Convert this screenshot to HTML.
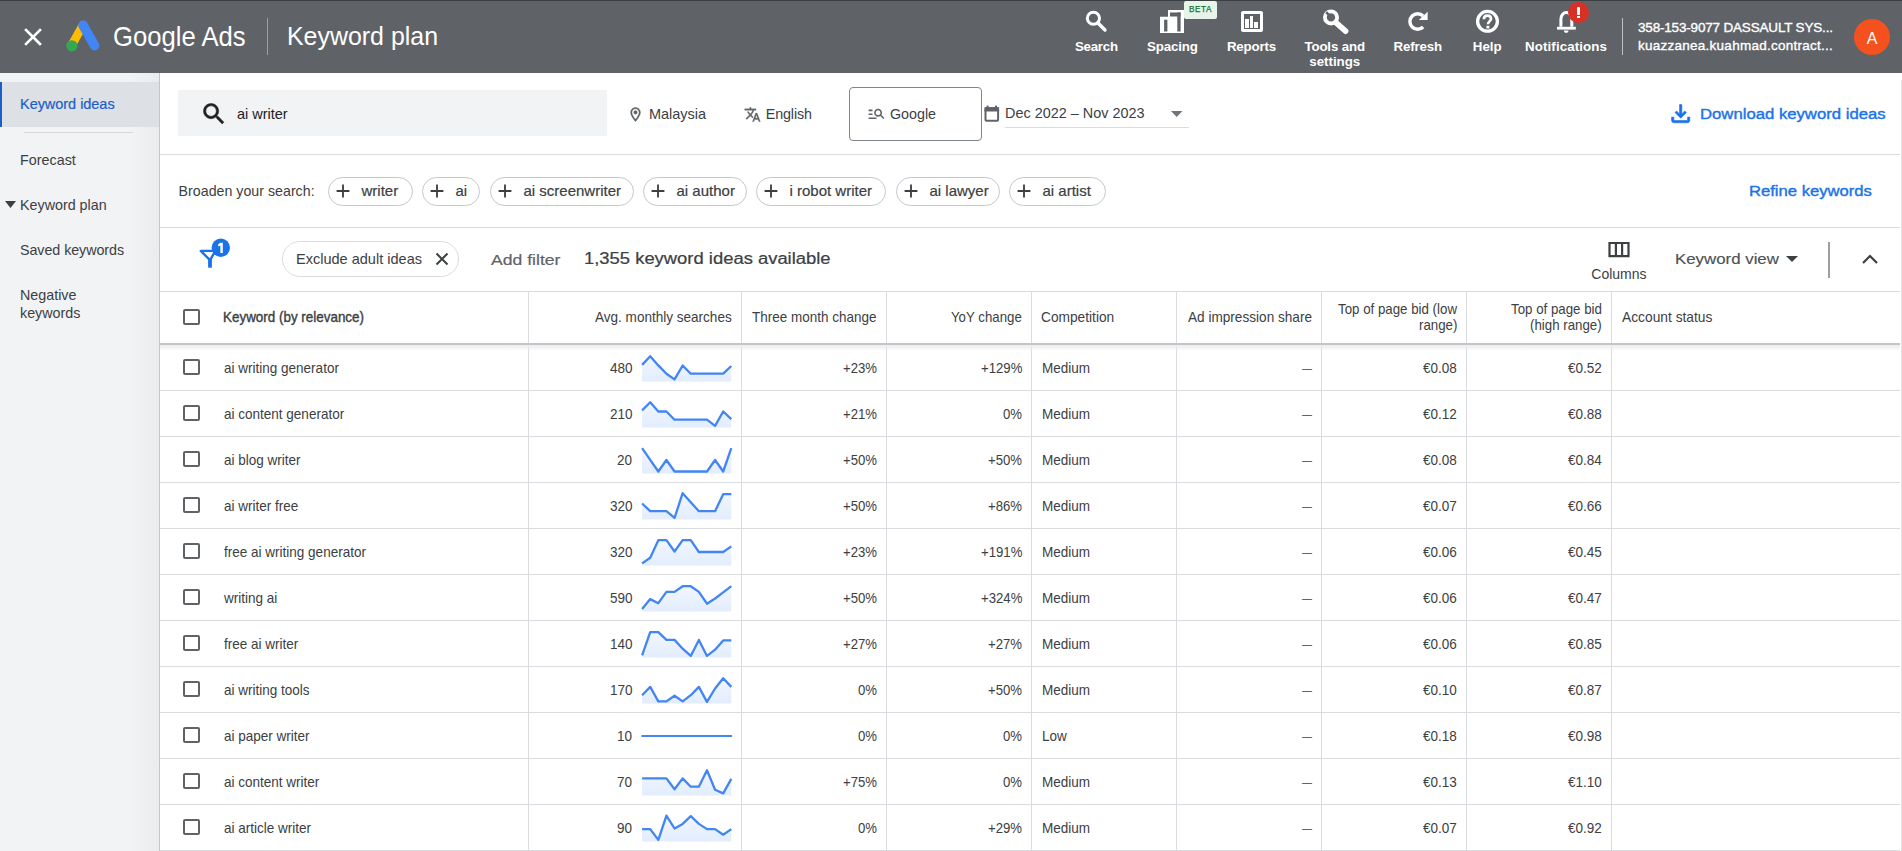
<!DOCTYPE html>
<html><head><meta charset="utf-8"><title>Keyword plan</title>
<style>
html,body{margin:0;padding:0;width:1902px;height:851px;overflow:hidden;background:#fff;font-family:"Liberation Sans", sans-serif;}
.t{position:absolute;white-space:nowrap;}
svg{display:block}
</style></head><body>
<div style="position:absolute;left:0px;top:0px;width:1902px;height:73px;background:#5f6368;"></div>
<div style="position:absolute;left:0px;top:0px;width:1902px;height:1px;background:#3c4043;"></div>
<svg style="position:absolute;left:22px;top:26px;" width="22" height="22" viewBox="0 0 22 22"><path d="M4 4L18 18M18 4L4 18" stroke="#fff" stroke-width="2.6" stroke-linecap="square"/></svg>
<svg style="position:absolute;left:62px;top:18px;" width="42" height="36" viewBox="0 0 42 36">
<path d="M21 7.2 L9.8 27" stroke="#fbbc04" stroke-width="8.6" stroke-linecap="round"/>
<path d="M21 7.2 L32.6 27.6" stroke="#4285f4" stroke-width="9.6" stroke-linecap="round"/>
<circle cx="9.9" cy="27.8" r="5.6" fill="#34a853"/>
</svg>
<div style="position:absolute;left:267px;top:18px;width:1px;height:37px;background:#9aa0a6;"></div>
<svg style="position:absolute;left:1080px;top:5px;" width="32" height="32" viewBox="0 0 32 32"><circle cx="13.4" cy="13.25" r="6.1" fill="none" stroke="#fff" stroke-width="3"/><path d="M18 18 L25 25" stroke="#fff" stroke-width="3.4" stroke-linecap="round"/></svg>
<svg style="position:absolute;left:1150px;top:0px;" width="40" height="40" viewBox="0 0 40 40">
<path d="M10 16.7H18V10H34V33H10Z" fill="#fff"/>
<rect x="14.1" y="19.7" width="3.3" height="11.8" fill="#5f6368"/>
<rect x="20" y="12.5" width="10.6" height="4" fill="#5f6368"/>
<rect x="27.3" y="12.5" width="3.3" height="19" fill="#5f6368"/>
</svg>
<div style="position:absolute;left:1184px;top:1px;width:33px;height:17.5px;background:#e6f4ea;border-radius:2px;"></div>
<div style="position:absolute;left:1241px;top:10.8px;width:15.5px;height:15px;border:3px solid #fff;border-radius:2px;"></div>
<div style="position:absolute;left:1245.2px;top:18.5px;width:3.4px;height:9.1px;background:#fff;"></div>
<div style="position:absolute;left:1249.9px;top:15.9px;width:3.4px;height:11.7px;background:#fff;"></div>
<div style="position:absolute;left:1254.2px;top:21.9px;width:3.6px;height:5.7px;background:#fff;"></div>
<svg style="position:absolute;left:1318px;top:5px;" width="32" height="32" viewBox="0 0 32 32">
<circle cx="13" cy="12.4" r="6.1" fill="none" stroke="#fff" stroke-width="3.8"/>
<path d="M8.2 7.2 L12.4 11.6" stroke="#5f6368" stroke-width="2.6"/>
<path d="M18 17.7 L27.6 26.2" stroke="#fff" stroke-width="5.6" stroke-linecap="round"/>
</svg>
<svg style="position:absolute;left:1402px;top:5px;" width="32" height="32" viewBox="0 0 32 32">
<path d="M21.13 10.97 A7.75 7.75 0 1 0 21.13 21.93" fill="none" stroke="#fff" stroke-width="3.4"/>
<path d="M16.9 15 H25.6 V6.8 Z" fill="#fff"/>
</svg>
<svg style="position:absolute;left:1471px;top:5px;" width="32" height="32" viewBox="0 0 32 32">
<circle cx="16.5" cy="16.3" r="9.9" fill="none" stroke="#fff" stroke-width="3.3"/>
<path d="M12.9 14.2 C12.9 11.9 14.5 10.6 16.5 10.6 C18.5 10.6 20 11.9 20 13.8 C20 16.3 16.9 16.5 16.9 19.3" fill="none" stroke="#fff" stroke-width="2.7"/>
<rect x="15.4" y="20.8" width="3" height="2.6" fill="#fff"/>
</svg>
<svg style="position:absolute;left:1550px;top:5px;" width="32" height="32" viewBox="0 0 32 32">
<path d="M10.9 21.8 V14.2 C10.9 10.3 13.4 7.6 16.3 7.6 C19.2 7.6 21.8 10.3 21.8 14.2 V21.8" fill="none" stroke="#fff" stroke-width="3"/>
<rect x="7" y="21.8" width="18.8" height="2.8" fill="#fff"/>
<path d="M13.8 25.6 H18.6 A2.4 2.4 0 0 1 13.8 25.6Z" fill="#fff"/>
</svg>
<div style="position:absolute;left:1567.9px;top:1.75px;width:21.4px;height:21.4px;border-radius:50%;background:#d93025"></div>
<div style="position:absolute;left:1577.3px;top:6.8px;width:2.8px;height:7.8px;background:#fff;border-radius:1px;"></div>
<div style="position:absolute;left:1577.3px;top:15.9px;width:2.8px;height:2.5px;background:#fff;"></div>
<div style="position:absolute;left:1622px;top:18px;width:1px;height:37px;background:#bdc1c6;"></div>
<div style="position:absolute;left:1854px;top:19px;width:36px;height:36px;border-radius:50%;background:#f4511e"></div>
<div style="position:absolute;left:0px;top:73px;width:159px;height:778px;background:#f1f3f4;"></div>
<div style="position:absolute;left:130px;top:73px;width:29px;height:778px;background:linear-gradient(90deg,rgba(0,0,0,0),rgba(60,64,67,0.045));"></div>
<div style="position:absolute;left:159px;top:73px;width:1.2px;height:778px;background:#c2c5c9;"></div>
<div style="position:absolute;left:0px;top:82px;width:159px;height:45px;background:#dde0e4;"></div>
<div style="position:absolute;left:0px;top:82px;width:2.2px;height:45px;background:#1a5fc8;"></div>
<div style="position:absolute;left:24px;top:132px;width:109px;height:1.2px;background:#d3d6da;"></div>
<svg style="position:absolute;left:5px;top:201px;" width="12" height="8" viewBox="0 0 12 8"><path d="M0 0h11L5.5 7z" fill="#3c4043"/></svg>
<div style="position:absolute;left:160px;top:73px;width:1742px;height:778px;background:#fff;"></div>
<div style="position:absolute;left:1901px;top:80px;width:1px;height:771px;background:#e3e3e3;"></div>
<div style="position:absolute;left:178px;top:90px;width:429px;height:45.5px;background:#f1f3f4;"></div>
<svg style="position:absolute;left:199.8px;top:100.2px" width="28" height="28" viewBox="0 0 24 24"><path d="M15.5 14h-.79l-.28-.27C15.41 12.59 16 11.11 16 9.5 16 5.91 13.09 3 9.5 3S3 5.91 3 9.5 5.91 16 9.5 16c1.61 0 3.09-.59 4.23-1.57l.27.28v.79l5 4.99L20.49 19l-4.99-5zm-6 0C7.01 14 5 11.99 5 9.5S7.01 5 9.5 5 14 7.01 14 9.5 11.99 14 9.5 14z" fill="#202124" stroke="#202124" stroke-width="0.45"/></svg>
<svg style="position:absolute;left:627px;top:105.6px" width="17" height="17" viewBox="0 0 24 24"><path d="M12 2C8.13 2 5 5.13 5 9c0 5.25 7 13 7 13s7-7.75 7-13c0-3.87-3.13-7-7-7zM7 9c0-2.76 2.24-5 5-5s5 2.24 5 5c0 2.88-2.88 7.19-5 9.88C9.92 16.21 7 11.85 7 9zm5 2.5a2.5 2.5 0 1 0 0-5 2.5 2.5 0 0 0 0 5z" fill="#5f6368" stroke="#5f6368" stroke-width="0.5"/></svg>
<svg style="position:absolute;left:743.5px;top:106px" width="17" height="17" viewBox="0 0 24 24"><path d="M12.87 15.07l-2.54-2.51.03-.03c1.74-1.94 2.98-4.17 3.71-6.53H17V4h-7V2H8v2H1v1.99h11.17C11.5 7.92 10.44 9.75 9 11.35 8.07 10.32 7.3 9.19 6.69 8h-2c.73 1.63 1.73 3.17 2.98 4.56l-5.09 5.02L4 19l5-5 3.11 3.11.76-2.04zM18.5 10h-2L12 22h2l1.12-3h4.75L21 22h2l-4.5-12zm-2.62 7l1.62-4.33L19.12 17h-3.24z" fill="#5f6368" stroke="#5f6368" stroke-width="0.45"/></svg>
<div style="position:absolute;left:849px;top:87px;width:131px;height:52px;border:1px solid #80868b;border-radius:4px;"></div>
<svg style="position:absolute;left:867px;top:104px;" width="19" height="19" viewBox="0 0 24 24"><path d="M7 9H2V7h5v2zm0 3H2v2h5v-2zm13.59 7l-3.83-3.83c-.8.52-1.74.83-2.76.83-2.76 0-5-2.24-5-5s2.24-5 5-5 5 2.24 5 5c0 1.02-.31 1.96-.83 2.75L22 17.59 20.59 19zM17 11c0-1.65-1.35-3-3-3s-3 1.35-3 3 1.35 3 3 3 3-1.35 3-3zM2 19h10v-2H2v2z" fill="#5f6368"/></svg>
<svg style="position:absolute;left:980px;top:100px;" width="24" height="26" viewBox="0 0 24 26"><rect x="5.5" y="8.2" width="12.6" height="12.6" rx="1" fill="none" stroke="#5f6368" stroke-width="2"/><rect x="4.5" y="7.2" width="14.6" height="4.3" fill="#5f6368"/><rect x="6.6" y="5.6" width="2" height="3" fill="#5f6368"/><rect x="15" y="5.6" width="2" height="3" fill="#5f6368"/></svg>
<svg style="position:absolute;left:1171px;top:110.8px;" width="13" height="7" viewBox="0 0 13 7"><path d="M0 0h11.4L5.7 6z" fill="#70757a"/></svg>
<div style="position:absolute;left:1005px;top:127px;width:184px;height:1px;background:#dadce0;"></div>
<svg style="position:absolute;left:1667.4px;top:99.6px" width="27.4" height="27.4" viewBox="0 0 24 24"><path d="M18 15v3H6v-3H4v3c0 1.1.9 2 2 2h12c1.1 0 2-.9 2-2v-3h-2zm-1-4l-1.41-1.41L13 12.17V4h-2v8.17L8.41 9.59 7 11l5 5 5-5z" fill="#1a73e8" stroke="#1a73e8" stroke-width="0.5"/></svg>
<div style="position:absolute;left:160px;top:154px;width:1740px;height:1px;background:#dadce0;"></div>
<div style="position:absolute;left:328px;top:177px;width:82.6px;height:27px;border:1px solid #c4c7cc;border-radius:15px;"></div>
<svg style="position:absolute;left:332px;top:180px;" width="22" height="22" viewBox="0 0 24 24"><path d="M19 13h-6v6h-2v-6H5v-2h6V5h2v6h6v2z" fill="#3c4043"/></svg>
<div style="position:absolute;left:422px;top:177px;width:56.0px;height:27px;border:1px solid #c4c7cc;border-radius:15px;"></div>
<svg style="position:absolute;left:426px;top:180px;" width="22" height="22" viewBox="0 0 24 24"><path d="M19 13h-6v6h-2v-6H5v-2h6V5h2v6h6v2z" fill="#3c4043"/></svg>
<div style="position:absolute;left:490px;top:177px;width:142.0px;height:27px;border:1px solid #c4c7cc;border-radius:15px;"></div>
<svg style="position:absolute;left:494px;top:180px;" width="22" height="22" viewBox="0 0 24 24"><path d="M19 13h-6v6h-2v-6H5v-2h6V5h2v6h6v2z" fill="#3c4043"/></svg>
<div style="position:absolute;left:643px;top:177px;width:101.5px;height:27px;border:1px solid #c4c7cc;border-radius:15px;"></div>
<svg style="position:absolute;left:647px;top:180px;" width="22" height="22" viewBox="0 0 24 24"><path d="M19 13h-6v6h-2v-6H5v-2h6V5h2v6h6v2z" fill="#3c4043"/></svg>
<div style="position:absolute;left:756px;top:177px;width:128.0px;height:27px;border:1px solid #c4c7cc;border-radius:15px;"></div>
<svg style="position:absolute;left:760px;top:180px;" width="22" height="22" viewBox="0 0 24 24"><path d="M19 13h-6v6h-2v-6H5v-2h6V5h2v6h6v2z" fill="#3c4043"/></svg>
<div style="position:absolute;left:896px;top:177px;width:101.6px;height:27px;border:1px solid #c4c7cc;border-radius:15px;"></div>
<svg style="position:absolute;left:900px;top:180px;" width="22" height="22" viewBox="0 0 24 24"><path d="M19 13h-6v6h-2v-6H5v-2h6V5h2v6h6v2z" fill="#3c4043"/></svg>
<div style="position:absolute;left:1009px;top:177px;width:94.6px;height:27px;border:1px solid #c4c7cc;border-radius:15px;"></div>
<svg style="position:absolute;left:1013px;top:180px;" width="22" height="22" viewBox="0 0 24 24"><path d="M19 13h-6v6h-2v-6H5v-2h6V5h2v6h6v2z" fill="#3c4043"/></svg>
<div style="position:absolute;left:160px;top:227px;width:1740px;height:1px;background:#dadce0;"></div>
<svg style="position:absolute;left:190px;top:232px;" width="50" height="46" viewBox="0 0 50 46">
<path d="M10.8 18.9 H25.4 L20 28.2 Z" fill="none" stroke="#1a73e8" stroke-width="2.4" stroke-linejoin="round"/>
<rect x="18.1" y="27" width="3.8" height="8.7" rx="0.6" fill="#1a73e8"/>
<circle cx="30.8" cy="15.7" r="9.2" fill="#1a73e8"/>
<path d="M30.4 10.8 H32.8 V21.1 H30.4 V13.6 L28.2 14.4 V12.3 Z" fill="#fff"/>
</svg>
<div style="position:absolute;left:282px;top:241px;width:175px;height:34px;border:1px solid #dadce0;border-radius:18px;"></div>
<svg style="position:absolute;left:434px;top:251px;" width="16" height="16" viewBox="0 0 16 16"><path d="M2.5 2.5L13.5 13.5M13.5 2.5L2.5 13.5" stroke="#3c4043" stroke-width="2"/></svg>
<svg style="position:absolute;left:1607px;top:241px;" width="24" height="18" viewBox="0 0 24 18"><path d="M2.5 2H21.5V15.2H2.5Z M8.9 2V15.2 M15.1 2V15.2" fill="none" stroke="#3c4043" stroke-width="2.2"/></svg>
<svg style="position:absolute;left:1786px;top:256px;" width="13" height="7" viewBox="0 0 13 7"><path d="M0 0h12L6 6z" fill="#3c4043"/></svg>
<div style="position:absolute;left:1828.2px;top:242px;width:1.4px;height:36px;background:#9aa0a6;"></div>
<svg style="position:absolute;left:1861px;top:252px;" width="18" height="13" viewBox="0 0 18 13"><path d="M2 11L9 4L16 11" fill="none" stroke="#3c4043" stroke-width="2.2"/></svg>
<div style="position:absolute;left:160px;top:291px;width:1740px;height:1px;background:#dadce0;"></div>
<div style="position:absolute;left:528px;top:292px;width:1px;height:559px;background:#dadce0;"></div>
<div style="position:absolute;left:741px;top:292px;width:1px;height:559px;background:#dadce0;"></div>
<div style="position:absolute;left:886px;top:292px;width:1px;height:559px;background:#dadce0;"></div>
<div style="position:absolute;left:1031px;top:292px;width:1px;height:559px;background:#dadce0;"></div>
<div style="position:absolute;left:1176px;top:292px;width:1px;height:559px;background:#dadce0;"></div>
<div style="position:absolute;left:1321px;top:292px;width:1px;height:559px;background:#dadce0;"></div>
<div style="position:absolute;left:1466px;top:292px;width:1px;height:559px;background:#dadce0;"></div>
<div style="position:absolute;left:1611px;top:292px;width:1px;height:559px;background:#dadce0;"></div>
<div style="position:absolute;left:160px;top:342.6px;width:1740px;height:2.2px;background:#c4c5c8;"></div>
<div style="position:absolute;left:160px;top:344.8px;width:1740px;height:6px;background:linear-gradient(#ebebeb,rgba(255,255,255,0));"></div>
<div style="position:absolute;left:183.4px;top:309px;width:12.2px;height:12.2px;border:2px solid #5f6368;border-radius:2px;"></div>
<svg width="0" height="0" style="position:absolute"><defs><linearGradient id="g" x1="0" y1="0" x2="0" y2="1"><stop offset="0" stop-color="#4285f4" stop-opacity="0.07"/><stop offset="1" stop-color="#4285f4" stop-opacity="0.15"/></linearGradient></defs></svg>
<div style="position:absolute;left:160px;top:390px;width:1740px;height:1px;background:#dadce0;"></div>
<div style="position:absolute;left:183.4px;top:359.2px;width:12.2px;height:12.2px;border:2px solid #5f6368;border-radius:2px;"></div>
<svg style="position:absolute;left:640px;top:344px;" width="94" height="46" viewBox="0 0 94 46"><path d="M2.10 20.90 L10.21 12.20 L18.32 21.40 L26.43 29.70 L34.54 35.40 L42.65 21.50 L50.75 29.70 L58.86 29.70 L66.97 29.70 L75.08 29.70 L83.19 29.70 L91.30 22.00 L91.30 37.4 L2.10 37.4 Z" fill="url(#g)"/><path d="M2.10 20.90 L10.21 12.20 L18.32 21.40 L26.43 29.70 L34.54 35.40 L42.65 21.50 L50.75 29.70 L58.86 29.70 L66.97 29.70 L75.08 29.70 L83.19 29.70 L91.30 22.00" stroke="#4285f4" stroke-width="2.3" fill="none" stroke-linejoin="round"/></svg>
<div style="position:absolute;left:160px;top:436px;width:1740px;height:1px;background:#dadce0;"></div>
<div style="position:absolute;left:183.4px;top:405.2px;width:12.2px;height:12.2px;border:2px solid #5f6368;border-radius:2px;"></div>
<svg style="position:absolute;left:640px;top:390px;" width="94" height="46" viewBox="0 0 94 46"><path d="M2.10 20.40 L10.21 12.20 L18.32 21.50 L26.43 21.50 L34.54 29.70 L42.65 29.70 L50.75 29.70 L58.86 29.70 L66.97 29.70 L75.08 35.90 L83.19 21.50 L91.30 29.20 L91.30 37.4 L2.10 37.4 Z" fill="url(#g)"/><path d="M2.10 20.40 L10.21 12.20 L18.32 21.50 L26.43 21.50 L34.54 29.70 L42.65 29.70 L50.75 29.70 L58.86 29.70 L66.97 29.70 L75.08 35.90 L83.19 21.50 L91.30 29.20" stroke="#4285f4" stroke-width="2.3" fill="none" stroke-linejoin="round"/></svg>
<div style="position:absolute;left:160px;top:482px;width:1740px;height:1px;background:#dadce0;"></div>
<div style="position:absolute;left:183.4px;top:451.2px;width:12.2px;height:12.2px;border:2px solid #5f6368;border-radius:2px;"></div>
<svg style="position:absolute;left:640px;top:436px;" width="94" height="46" viewBox="0 0 94 46"><path d="M2.10 12.20 L10.21 23.80 L18.32 35.50 L26.43 24.00 L34.54 35.50 L42.65 35.50 L50.75 35.50 L58.86 35.50 L66.97 35.50 L75.08 24.00 L83.19 35.50 L91.30 12.20 L91.30 37.4 L2.10 37.4 Z" fill="url(#g)"/><path d="M2.10 12.20 L10.21 23.80 L18.32 35.50 L26.43 24.00 L34.54 35.50 L42.65 35.50 L50.75 35.50 L58.86 35.50 L66.97 35.50 L75.08 24.00 L83.19 35.50 L91.30 12.20" stroke="#4285f4" stroke-width="2.3" fill="none" stroke-linejoin="round"/></svg>
<div style="position:absolute;left:160px;top:528px;width:1740px;height:1px;background:#dadce0;"></div>
<div style="position:absolute;left:183.4px;top:497.2px;width:12.2px;height:12.2px;border:2px solid #5f6368;border-radius:2px;"></div>
<svg style="position:absolute;left:640px;top:482px;" width="94" height="46" viewBox="0 0 94 46"><path d="M2.10 21.50 L10.21 29.20 L18.32 29.20 L26.43 29.20 L34.54 35.90 L42.65 11.20 L50.75 20.20 L58.86 29.20 L66.97 29.20 L75.08 29.20 L83.19 12.20 L91.30 12.20 L91.30 37.4 L2.10 37.4 Z" fill="url(#g)"/><path d="M2.10 21.50 L10.21 29.20 L18.32 29.20 L26.43 29.20 L34.54 35.90 L42.65 11.20 L50.75 20.20 L58.86 29.20 L66.97 29.20 L75.08 29.20 L83.19 12.20 L91.30 12.20" stroke="#4285f4" stroke-width="2.3" fill="none" stroke-linejoin="round"/></svg>
<div style="position:absolute;left:160px;top:574px;width:1740px;height:1px;background:#dadce0;"></div>
<div style="position:absolute;left:183.4px;top:543.2px;width:12.2px;height:12.2px;border:2px solid #5f6368;border-radius:2px;"></div>
<svg style="position:absolute;left:640px;top:528px;" width="94" height="46" viewBox="0 0 94 46"><path d="M2.10 35.40 L10.21 29.70 L18.32 12.20 L26.43 12.20 L34.54 23.50 L42.65 12.20 L50.75 12.20 L58.86 24.00 L66.97 24.00 L75.08 24.00 L83.19 24.00 L91.30 18.40 L91.30 37.4 L2.10 37.4 Z" fill="url(#g)"/><path d="M2.10 35.40 L10.21 29.70 L18.32 12.20 L26.43 12.20 L34.54 23.50 L42.65 12.20 L50.75 12.20 L58.86 24.00 L66.97 24.00 L75.08 24.00 L83.19 24.00 L91.30 18.40" stroke="#4285f4" stroke-width="2.3" fill="none" stroke-linejoin="round"/></svg>
<div style="position:absolute;left:160px;top:620px;width:1740px;height:1px;background:#dadce0;"></div>
<div style="position:absolute;left:183.4px;top:589.2px;width:12.2px;height:12.2px;border:2px solid #5f6368;border-radius:2px;"></div>
<svg style="position:absolute;left:640px;top:574px;" width="94" height="46" viewBox="0 0 94 46"><path d="M2.10 34.90 L10.21 25.10 L18.32 29.20 L26.43 17.90 L34.54 17.90 L42.65 12.20 L50.75 12.20 L58.86 17.90 L66.97 29.70 L75.08 24.50 L83.19 18.40 L91.30 12.20 L91.30 37.4 L2.10 37.4 Z" fill="url(#g)"/><path d="M2.10 34.90 L10.21 25.10 L18.32 29.20 L26.43 17.90 L34.54 17.90 L42.65 12.20 L50.75 12.20 L58.86 17.90 L66.97 29.70 L75.08 24.50 L83.19 18.40 L91.30 12.20" stroke="#4285f4" stroke-width="2.3" fill="none" stroke-linejoin="round"/></svg>
<div style="position:absolute;left:160px;top:666px;width:1740px;height:1px;background:#dadce0;"></div>
<div style="position:absolute;left:183.4px;top:635.2px;width:12.2px;height:12.2px;border:2px solid #5f6368;border-radius:2px;"></div>
<svg style="position:absolute;left:640px;top:620px;" width="94" height="46" viewBox="0 0 94 46"><path d="M2.10 35.40 L10.21 12.20 L18.32 12.20 L26.43 19.90 L34.54 19.90 L42.65 28.70 L50.75 35.90 L58.86 19.90 L66.97 35.90 L75.08 29.70 L83.19 20.40 L91.30 20.40 L91.30 37.4 L2.10 37.4 Z" fill="url(#g)"/><path d="M2.10 35.40 L10.21 12.20 L18.32 12.20 L26.43 19.90 L34.54 19.90 L42.65 28.70 L50.75 35.90 L58.86 19.90 L66.97 35.90 L75.08 29.70 L83.19 20.40 L91.30 20.40" stroke="#4285f4" stroke-width="2.3" fill="none" stroke-linejoin="round"/></svg>
<div style="position:absolute;left:160px;top:712px;width:1740px;height:1px;background:#dadce0;"></div>
<div style="position:absolute;left:183.4px;top:681.2px;width:12.2px;height:12.2px;border:2px solid #5f6368;border-radius:2px;"></div>
<svg style="position:absolute;left:640px;top:666px;" width="94" height="46" viewBox="0 0 94 46"><path d="M2.10 29.20 L10.21 20.90 L18.32 35.40 L26.43 35.40 L34.54 29.70 L42.65 35.40 L50.75 29.20 L58.86 20.90 L66.97 35.90 L75.08 22.50 L83.19 12.20 L91.30 20.90 L91.30 37.4 L2.10 37.4 Z" fill="url(#g)"/><path d="M2.10 29.20 L10.21 20.90 L18.32 35.40 L26.43 35.40 L34.54 29.70 L42.65 35.40 L50.75 29.20 L58.86 20.90 L66.97 35.90 L75.08 22.50 L83.19 12.20 L91.30 20.90" stroke="#4285f4" stroke-width="2.3" fill="none" stroke-linejoin="round"/></svg>
<div style="position:absolute;left:160px;top:758px;width:1740px;height:1px;background:#dadce0;"></div>
<div style="position:absolute;left:183.4px;top:727.2px;width:12.2px;height:12.2px;border:2px solid #5f6368;border-radius:2px;"></div>
<svg style="position:absolute;left:640px;top:712px;" width="94" height="46" viewBox="0 0 94 46"><path d="M2.1 24 H91.3" stroke="#4285f4" stroke-width="2" fill="none" stroke-linecap="round"/></svg>
<div style="position:absolute;left:160px;top:804px;width:1740px;height:1px;background:#dadce0;"></div>
<div style="position:absolute;left:183.4px;top:773.2px;width:12.2px;height:12.2px;border:2px solid #5f6368;border-radius:2px;"></div>
<svg style="position:absolute;left:640px;top:758px;" width="94" height="46" viewBox="0 0 94 46"><path d="M2.10 20.40 L10.21 20.40 L18.32 20.40 L26.43 20.40 L34.54 31.20 L42.65 20.40 L50.75 28.70 L58.86 28.70 L66.97 12.20 L75.08 31.80 L83.19 35.40 L91.30 20.90 L91.30 37.4 L2.10 37.4 Z" fill="url(#g)"/><path d="M2.10 20.40 L10.21 20.40 L18.32 20.40 L26.43 20.40 L34.54 31.20 L42.65 20.40 L50.75 28.70 L58.86 28.70 L66.97 12.20 L75.08 31.80 L83.19 35.40 L91.30 20.90" stroke="#4285f4" stroke-width="2.3" fill="none" stroke-linejoin="round"/></svg>
<div style="position:absolute;left:160px;top:850px;width:1740px;height:1px;background:#dadce0;"></div>
<div style="position:absolute;left:183.4px;top:819.2px;width:12.2px;height:12.2px;border:2px solid #5f6368;border-radius:2px;"></div>
<svg style="position:absolute;left:640px;top:804px;" width="94" height="46" viewBox="0 0 94 46"><path d="M2.10 25.10 L10.21 25.10 L18.32 35.90 L26.43 11.70 L34.54 24.50 L42.65 19.90 L50.75 12.20 L58.86 19.90 L66.97 25.10 L75.08 25.10 L83.19 30.70 L91.30 25.10 L91.30 37.4 L2.10 37.4 Z" fill="url(#g)"/><path d="M2.10 25.10 L10.21 25.10 L18.32 35.90 L26.43 11.70 L34.54 24.50 L42.65 19.90 L50.75 12.20 L58.86 19.90 L66.97 25.10 L75.08 25.10 L83.19 30.70 L91.30 25.10" stroke="#4285f4" stroke-width="2.3" fill="none" stroke-linejoin="round"/></svg>
<div class="t" style="left:113.00px;top:21.78px;font-size:28.5px;line-height:28.5px;color:#fff;font-weight:400;letter-spacing:0.000px;transform:scaleX(0.8998);transform-origin:0 0;">Google Ads</div>
<div class="t" style="left:287.00px;top:23.57px;font-size:25.8px;line-height:25.8px;color:#fff;font-weight:400;letter-spacing:0.000px;transform:scaleX(0.9661);transform-origin:0 0;">Keyword plan</div>
<div class="t" style="left:1188.98px;top:5.83px;font-size:8.2px;line-height:8.2px;color:#137333;font-weight:400;letter-spacing:0.556px;-webkit-text-stroke:0.25px #137333;">BETA</div>
<div class="t" style="left:1074.89px;top:39.70px;font-size:13.3px;line-height:13.3px;color:#fff;font-weight:700;letter-spacing:-0.225px;">Search</div>
<div class="t" style="left:1146.93px;top:39.70px;font-size:13.3px;line-height:13.3px;color:#fff;font-weight:700;letter-spacing:-0.131px;">Spacing</div>
<div class="t" style="left:1226.91px;top:39.70px;font-size:13.3px;line-height:13.3px;color:#fff;font-weight:700;letter-spacing:-0.177px;">Reports</div>
<div class="t" style="left:1393.43px;top:39.70px;font-size:13.3px;line-height:13.3px;color:#fff;font-weight:700;letter-spacing:-0.145px;">Refresh</div>
<div class="t" style="left:1472.77px;top:39.70px;font-size:13.3px;line-height:13.3px;color:#fff;font-weight:700;letter-spacing:0.046px;">Help</div>
<div class="t" style="left:1525.06px;top:39.70px;font-size:13.3px;line-height:13.3px;color:#fff;font-weight:700;letter-spacing:0.114px;">Notifications</div>
<div class="t" style="left:1304.43px;top:39.70px;font-size:13.3px;line-height:13.3px;color:#fff;font-weight:700;letter-spacing:-0.145px;">Tools and</div>
<div class="t" style="left:1309.25px;top:55.20px;font-size:13.3px;line-height:13.3px;color:#fff;font-weight:700;letter-spacing:0.002px;">settings</div>
<div class="t" style="left:1638.00px;top:21.02px;font-size:13.5px;line-height:13.5px;color:#fff;font-weight:400;letter-spacing:-0.182px;-webkit-text-stroke:0.35px #fff;">358-153-9077 DASSAULT SYS...</div>
<div class="t" style="left:1638.00px;top:39.02px;font-size:13.5px;line-height:13.5px;color:#fff;font-weight:400;letter-spacing:0.255px;-webkit-text-stroke:0.35px #fff;">kuazzanea.kuahmad.contract...</div>
<div class="t" style="left:1866.66px;top:30.80px;font-size:16px;line-height:16px;color:#fff;font-weight:400;letter-spacing:0.000px;">A</div>
<div class="t" style="left:20.00px;top:97.27px;font-size:14.5px;line-height:14.5px;color:#1a5fc8;font-weight:400;letter-spacing:-0.039px;-webkit-text-stroke:0.2px #1a5fc8;">Keyword ideas</div>
<div class="t" style="left:20.00px;top:152.65px;font-size:14.3px;line-height:14.3px;color:#3c4043;font-weight:400;letter-spacing:0.023px;">Forecast</div>
<div class="t" style="left:20.00px;top:197.84px;font-size:14.3px;line-height:14.3px;color:#3c4043;font-weight:400;letter-spacing:0.000px;">Keyword plan</div>
<div class="t" style="left:20.00px;top:242.84px;font-size:14.3px;line-height:14.3px;color:#3c4043;font-weight:400;letter-spacing:-0.064px;">Saved keywords</div>
<div class="t" style="left:20.00px;top:287.85px;font-size:14.3px;line-height:14.3px;color:#3c4043;font-weight:400;letter-spacing:0.000px;">Negative</div>
<div class="t" style="left:20.00px;top:305.85px;font-size:14.3px;line-height:14.3px;color:#3c4043;font-weight:400;letter-spacing:0.000px;">keywords</div>
<div class="t" style="left:237.00px;top:106.97px;font-size:14.5px;line-height:14.5px;color:#202124;font-weight:400;letter-spacing:-0.029px;">ai writer</div>
<div class="t" style="left:649.00px;top:107.38px;font-size:14.5px;line-height:14.5px;color:#3c4043;font-weight:400;letter-spacing:-0.027px;">Malaysia</div>
<div class="t" style="left:765.70px;top:106.55px;font-size:14.3px;line-height:14.3px;color:#3c4043;font-weight:400;letter-spacing:-0.084px;">English</div>
<div class="t" style="left:890.00px;top:106.55px;font-size:14.3px;line-height:14.3px;color:#3c4043;font-weight:400;letter-spacing:-0.017px;">Google</div>
<div class="t" style="left:1005.00px;top:106.46px;font-size:14.4px;line-height:14.4px;color:#3c4043;font-weight:400;letter-spacing:0.021px;">Dec 2022 – Nov 2023</div>
<div class="t" style="left:1699.60px;top:105.73px;font-size:15.5px;line-height:15.5px;color:#1a73e8;font-weight:400;letter-spacing:0.000px;transform:scaleX(1.0771);transform-origin:0 0;-webkit-text-stroke:0.4px #1a73e8;">Download keyword ideas</div>
<div class="t" style="left:178.60px;top:184.23px;font-size:14.2px;line-height:14.2px;color:#3c4043;font-weight:400;letter-spacing:0.018px;">Broaden your search:</div>
<div class="t" style="left:361.50px;top:182.75px;font-size:15px;line-height:15px;color:#3c4043;font-weight:400;letter-spacing:0.000px;-webkit-text-stroke:0.2px #3c4043;">writer</div>
<div class="t" style="left:455.50px;top:182.75px;font-size:15px;line-height:15px;color:#3c4043;font-weight:400;letter-spacing:0.000px;-webkit-text-stroke:0.2px #3c4043;">ai</div>
<div class="t" style="left:523.50px;top:182.75px;font-size:15px;line-height:15px;color:#3c4043;font-weight:400;letter-spacing:0.000px;-webkit-text-stroke:0.2px #3c4043;">ai screenwriter</div>
<div class="t" style="left:676.50px;top:182.75px;font-size:15px;line-height:15px;color:#3c4043;font-weight:400;letter-spacing:0.000px;-webkit-text-stroke:0.2px #3c4043;">ai author</div>
<div class="t" style="left:789.50px;top:182.75px;font-size:15px;line-height:15px;color:#3c4043;font-weight:400;letter-spacing:0.000px;-webkit-text-stroke:0.2px #3c4043;">i robot writer</div>
<div class="t" style="left:929.50px;top:182.75px;font-size:15px;line-height:15px;color:#3c4043;font-weight:400;letter-spacing:0.000px;-webkit-text-stroke:0.2px #3c4043;">ai lawyer</div>
<div class="t" style="left:1042.50px;top:182.75px;font-size:15px;line-height:15px;color:#3c4043;font-weight:400;letter-spacing:0.000px;-webkit-text-stroke:0.2px #3c4043;">ai artist</div>
<div class="t" style="left:1748.70px;top:183.02px;font-size:15.5px;line-height:15.5px;color:#1a73e8;font-weight:400;letter-spacing:0.000px;transform:scaleX(1.0718);transform-origin:0 0;-webkit-text-stroke:0.4px #1a73e8;">Refine keywords</div>
<div class="t" style="left:296.00px;top:251.88px;font-size:14.5px;line-height:14.5px;color:#3c4043;font-weight:400;letter-spacing:0.013px;">Exclude adult ideas</div>
<div class="t" style="left:491.00px;top:251.88px;font-size:15.2px;line-height:15.2px;color:#5f6368;font-weight:400;letter-spacing:0.000px;transform:scaleX(1.1579);transform-origin:0 0;-webkit-text-stroke:0.2px #5f6368;">Add filter</div>
<div class="t" style="left:584.40px;top:251.20px;font-size:16px;line-height:16px;color:#3c4043;font-weight:400;letter-spacing:0.000px;transform:scaleX(1.1504);transform-origin:0 0;-webkit-text-stroke:0.22px #3c4043;">1,355 keyword ideas available</div>
<div class="t" style="left:1591.30px;top:267.10px;font-size:14px;line-height:14px;color:#3c4043;font-weight:400;letter-spacing:0.008px;">Columns</div>
<div class="t" style="left:1674.50px;top:251.92px;font-size:14.8px;line-height:14.8px;color:#4d5156;font-weight:400;letter-spacing:0.000px;transform:scaleX(1.1382);transform-origin:0 0;-webkit-text-stroke:0.15px #4d5156;">Keyword view</div>
<div class="t" style="left:223.40px;top:309.85px;font-size:14.3px;line-height:14.3px;color:#3c4043;font-weight:400;letter-spacing:0.000px;transform:scaleX(0.9389);transform-origin:0 0;-webkit-text-stroke:0.38px #3c4043;">Keyword (by relevance)</div>
<div class="t" style="left:594.60px;top:309.85px;font-size:14.3px;line-height:14.3px;color:#3c4043;font-weight:400;letter-spacing:0.000px;transform:scaleX(0.9469);transform-origin:0 0;">Avg. monthly searches</div>
<div class="t" style="left:752.00px;top:309.85px;font-size:14.3px;line-height:14.3px;color:#3c4043;font-weight:400;letter-spacing:0.000px;transform:scaleX(0.9429);transform-origin:0 0;">Three month change</div>
<div class="t" style="left:951.00px;top:309.85px;font-size:14.3px;line-height:14.3px;color:#3c4043;font-weight:400;letter-spacing:0.000px;transform:scaleX(0.9270);transform-origin:0 0;">YoY change</div>
<div class="t" style="left:1041.40px;top:309.85px;font-size:14.3px;line-height:14.3px;color:#3c4043;font-weight:400;letter-spacing:0.000px;transform:scaleX(0.9595);transform-origin:0 0;">Competition</div>
<div class="t" style="left:1187.90px;top:309.85px;font-size:14.3px;line-height:14.3px;color:#3c4043;font-weight:400;letter-spacing:0.000px;transform:scaleX(0.9515);transform-origin:0 0;">Ad impression share</div>
<div class="t" style="left:1338.00px;top:302.04px;font-size:14.3px;line-height:14.3px;color:#3c4043;font-weight:400;letter-spacing:0.000px;transform:scaleX(0.9300);transform-origin:0 0;">Top of page bid (low</div>
<div class="t" style="left:1418.57px;top:317.85px;font-size:14.3px;line-height:14.3px;color:#3c4043;font-weight:400;letter-spacing:0.000px;transform:scaleX(0.9300);transform-origin:0 0;">range)</div>
<div class="t" style="left:1511.07px;top:302.04px;font-size:14.3px;line-height:14.3px;color:#3c4043;font-weight:400;letter-spacing:0.000px;transform:scaleX(0.9300);transform-origin:0 0;">Top of page bid</div>
<div class="t" style="left:1530.31px;top:317.85px;font-size:14.3px;line-height:14.3px;color:#3c4043;font-weight:400;letter-spacing:0.000px;transform:scaleX(0.9300);transform-origin:0 0;">(high range)</div>
<div class="t" style="left:1622.00px;top:309.64px;font-size:14.3px;line-height:14.3px;color:#3c4043;font-weight:400;letter-spacing:0.000px;transform:scaleX(0.9640);transform-origin:0 0;">Account status</div>
<div class="t" style="left:223.50px;top:361.04px;font-size:14.3px;line-height:14.3px;color:#3c4043;font-weight:400;letter-spacing:0.000px;transform:scaleX(0.9450);transform-origin:0 0;">ai writing generator</div>
<div class="t" style="left:609.96px;top:361.04px;font-size:14.3px;line-height:14.3px;color:#3c4043;font-weight:400;letter-spacing:0.000px;transform:scaleX(0.9450);transform-origin:0 0;">480</div>
<div class="t" style="left:842.79px;top:361.04px;font-size:14.3px;line-height:14.3px;color:#3c4043;font-weight:400;letter-spacing:0.000px;transform:scaleX(0.9200);transform-origin:0 0;">+23%</div>
<div class="t" style="left:980.98px;top:361.04px;font-size:14.3px;line-height:14.3px;color:#3c4043;font-weight:400;letter-spacing:0.000px;transform:scaleX(0.9200);transform-origin:0 0;">+129%</div>
<div class="t" style="left:1041.60px;top:361.04px;font-size:14.3px;line-height:14.3px;color:#3c4043;font-weight:400;letter-spacing:0.000px;transform:scaleX(0.9450);transform-origin:0 0;">Medium</div>
<div class="t" style="left:1301.90px;top:363.70px;font-size:10px;line-height:10px;color:#3c4043;font-weight:400;letter-spacing:0.000px;">—</div>
<div class="t" style="left:1423.49px;top:361.04px;font-size:14.3px;line-height:14.3px;color:#3c4043;font-weight:400;letter-spacing:0.000px;transform:scaleX(0.9450);transform-origin:0 0;">€0.08</div>
<div class="t" style="left:1568.49px;top:361.04px;font-size:14.3px;line-height:14.3px;color:#3c4043;font-weight:400;letter-spacing:0.000px;transform:scaleX(0.9450);transform-origin:0 0;">€0.52</div>
<div class="t" style="left:223.50px;top:407.04px;font-size:14.3px;line-height:14.3px;color:#3c4043;font-weight:400;letter-spacing:0.000px;transform:scaleX(0.9450);transform-origin:0 0;">ai content generator</div>
<div class="t" style="left:609.96px;top:407.04px;font-size:14.3px;line-height:14.3px;color:#3c4043;font-weight:400;letter-spacing:0.000px;transform:scaleX(0.9450);transform-origin:0 0;">210</div>
<div class="t" style="left:842.79px;top:407.04px;font-size:14.3px;line-height:14.3px;color:#3c4043;font-weight:400;letter-spacing:0.000px;transform:scaleX(0.9200);transform-origin:0 0;">+21%</div>
<div class="t" style="left:1003.29px;top:407.04px;font-size:14.3px;line-height:14.3px;color:#3c4043;font-weight:400;letter-spacing:0.000px;transform:scaleX(0.9200);transform-origin:0 0;">0%</div>
<div class="t" style="left:1041.60px;top:407.04px;font-size:14.3px;line-height:14.3px;color:#3c4043;font-weight:400;letter-spacing:0.000px;transform:scaleX(0.9450);transform-origin:0 0;">Medium</div>
<div class="t" style="left:1301.90px;top:409.70px;font-size:10px;line-height:10px;color:#3c4043;font-weight:400;letter-spacing:0.000px;">—</div>
<div class="t" style="left:1423.49px;top:407.04px;font-size:14.3px;line-height:14.3px;color:#3c4043;font-weight:400;letter-spacing:0.000px;transform:scaleX(0.9450);transform-origin:0 0;">€0.12</div>
<div class="t" style="left:1568.49px;top:407.04px;font-size:14.3px;line-height:14.3px;color:#3c4043;font-weight:400;letter-spacing:0.000px;transform:scaleX(0.9450);transform-origin:0 0;">€0.88</div>
<div class="t" style="left:223.50px;top:453.04px;font-size:14.3px;line-height:14.3px;color:#3c4043;font-weight:400;letter-spacing:0.000px;transform:scaleX(0.9450);transform-origin:0 0;">ai blog writer</div>
<div class="t" style="left:617.47px;top:453.04px;font-size:14.3px;line-height:14.3px;color:#3c4043;font-weight:400;letter-spacing:0.000px;transform:scaleX(0.9450);transform-origin:0 0;">20</div>
<div class="t" style="left:842.79px;top:453.04px;font-size:14.3px;line-height:14.3px;color:#3c4043;font-weight:400;letter-spacing:0.000px;transform:scaleX(0.9200);transform-origin:0 0;">+50%</div>
<div class="t" style="left:988.29px;top:453.04px;font-size:14.3px;line-height:14.3px;color:#3c4043;font-weight:400;letter-spacing:0.000px;transform:scaleX(0.9200);transform-origin:0 0;">+50%</div>
<div class="t" style="left:1041.60px;top:453.04px;font-size:14.3px;line-height:14.3px;color:#3c4043;font-weight:400;letter-spacing:0.000px;transform:scaleX(0.9450);transform-origin:0 0;">Medium</div>
<div class="t" style="left:1301.90px;top:455.70px;font-size:10px;line-height:10px;color:#3c4043;font-weight:400;letter-spacing:0.000px;">—</div>
<div class="t" style="left:1423.49px;top:453.04px;font-size:14.3px;line-height:14.3px;color:#3c4043;font-weight:400;letter-spacing:0.000px;transform:scaleX(0.9450);transform-origin:0 0;">€0.08</div>
<div class="t" style="left:1568.49px;top:453.04px;font-size:14.3px;line-height:14.3px;color:#3c4043;font-weight:400;letter-spacing:0.000px;transform:scaleX(0.9450);transform-origin:0 0;">€0.84</div>
<div class="t" style="left:223.50px;top:499.04px;font-size:14.3px;line-height:14.3px;color:#3c4043;font-weight:400;letter-spacing:0.000px;transform:scaleX(0.9450);transform-origin:0 0;">ai writer free</div>
<div class="t" style="left:609.96px;top:499.04px;font-size:14.3px;line-height:14.3px;color:#3c4043;font-weight:400;letter-spacing:0.000px;transform:scaleX(0.9450);transform-origin:0 0;">320</div>
<div class="t" style="left:842.79px;top:499.04px;font-size:14.3px;line-height:14.3px;color:#3c4043;font-weight:400;letter-spacing:0.000px;transform:scaleX(0.9200);transform-origin:0 0;">+50%</div>
<div class="t" style="left:988.29px;top:499.04px;font-size:14.3px;line-height:14.3px;color:#3c4043;font-weight:400;letter-spacing:0.000px;transform:scaleX(0.9200);transform-origin:0 0;">+86%</div>
<div class="t" style="left:1041.60px;top:499.04px;font-size:14.3px;line-height:14.3px;color:#3c4043;font-weight:400;letter-spacing:0.000px;transform:scaleX(0.9450);transform-origin:0 0;">Medium</div>
<div class="t" style="left:1301.90px;top:501.70px;font-size:10px;line-height:10px;color:#3c4043;font-weight:400;letter-spacing:0.000px;">—</div>
<div class="t" style="left:1423.49px;top:499.04px;font-size:14.3px;line-height:14.3px;color:#3c4043;font-weight:400;letter-spacing:0.000px;transform:scaleX(0.9450);transform-origin:0 0;">€0.07</div>
<div class="t" style="left:1568.49px;top:499.04px;font-size:14.3px;line-height:14.3px;color:#3c4043;font-weight:400;letter-spacing:0.000px;transform:scaleX(0.9450);transform-origin:0 0;">€0.66</div>
<div class="t" style="left:223.50px;top:545.05px;font-size:14.3px;line-height:14.3px;color:#3c4043;font-weight:400;letter-spacing:0.000px;transform:scaleX(0.9450);transform-origin:0 0;">free ai writing generator</div>
<div class="t" style="left:609.96px;top:545.05px;font-size:14.3px;line-height:14.3px;color:#3c4043;font-weight:400;letter-spacing:0.000px;transform:scaleX(0.9450);transform-origin:0 0;">320</div>
<div class="t" style="left:842.79px;top:545.05px;font-size:14.3px;line-height:14.3px;color:#3c4043;font-weight:400;letter-spacing:0.000px;transform:scaleX(0.9200);transform-origin:0 0;">+23%</div>
<div class="t" style="left:980.98px;top:545.05px;font-size:14.3px;line-height:14.3px;color:#3c4043;font-weight:400;letter-spacing:0.000px;transform:scaleX(0.9200);transform-origin:0 0;">+191%</div>
<div class="t" style="left:1041.60px;top:545.05px;font-size:14.3px;line-height:14.3px;color:#3c4043;font-weight:400;letter-spacing:0.000px;transform:scaleX(0.9450);transform-origin:0 0;">Medium</div>
<div class="t" style="left:1301.90px;top:547.70px;font-size:10px;line-height:10px;color:#3c4043;font-weight:400;letter-spacing:0.000px;">—</div>
<div class="t" style="left:1423.49px;top:545.05px;font-size:14.3px;line-height:14.3px;color:#3c4043;font-weight:400;letter-spacing:0.000px;transform:scaleX(0.9450);transform-origin:0 0;">€0.06</div>
<div class="t" style="left:1568.49px;top:545.05px;font-size:14.3px;line-height:14.3px;color:#3c4043;font-weight:400;letter-spacing:0.000px;transform:scaleX(0.9450);transform-origin:0 0;">€0.45</div>
<div class="t" style="left:223.50px;top:591.05px;font-size:14.3px;line-height:14.3px;color:#3c4043;font-weight:400;letter-spacing:0.000px;transform:scaleX(0.9450);transform-origin:0 0;">writing ai</div>
<div class="t" style="left:609.96px;top:591.05px;font-size:14.3px;line-height:14.3px;color:#3c4043;font-weight:400;letter-spacing:0.000px;transform:scaleX(0.9450);transform-origin:0 0;">590</div>
<div class="t" style="left:842.79px;top:591.05px;font-size:14.3px;line-height:14.3px;color:#3c4043;font-weight:400;letter-spacing:0.000px;transform:scaleX(0.9200);transform-origin:0 0;">+50%</div>
<div class="t" style="left:980.98px;top:591.05px;font-size:14.3px;line-height:14.3px;color:#3c4043;font-weight:400;letter-spacing:0.000px;transform:scaleX(0.9200);transform-origin:0 0;">+324%</div>
<div class="t" style="left:1041.60px;top:591.05px;font-size:14.3px;line-height:14.3px;color:#3c4043;font-weight:400;letter-spacing:0.000px;transform:scaleX(0.9450);transform-origin:0 0;">Medium</div>
<div class="t" style="left:1301.90px;top:593.70px;font-size:10px;line-height:10px;color:#3c4043;font-weight:400;letter-spacing:0.000px;">—</div>
<div class="t" style="left:1423.49px;top:591.05px;font-size:14.3px;line-height:14.3px;color:#3c4043;font-weight:400;letter-spacing:0.000px;transform:scaleX(0.9450);transform-origin:0 0;">€0.06</div>
<div class="t" style="left:1568.49px;top:591.05px;font-size:14.3px;line-height:14.3px;color:#3c4043;font-weight:400;letter-spacing:0.000px;transform:scaleX(0.9450);transform-origin:0 0;">€0.47</div>
<div class="t" style="left:223.50px;top:637.05px;font-size:14.3px;line-height:14.3px;color:#3c4043;font-weight:400;letter-spacing:0.000px;transform:scaleX(0.9450);transform-origin:0 0;">free ai writer</div>
<div class="t" style="left:609.96px;top:637.05px;font-size:14.3px;line-height:14.3px;color:#3c4043;font-weight:400;letter-spacing:0.000px;transform:scaleX(0.9450);transform-origin:0 0;">140</div>
<div class="t" style="left:842.79px;top:637.05px;font-size:14.3px;line-height:14.3px;color:#3c4043;font-weight:400;letter-spacing:0.000px;transform:scaleX(0.9200);transform-origin:0 0;">+27%</div>
<div class="t" style="left:988.29px;top:637.05px;font-size:14.3px;line-height:14.3px;color:#3c4043;font-weight:400;letter-spacing:0.000px;transform:scaleX(0.9200);transform-origin:0 0;">+27%</div>
<div class="t" style="left:1041.60px;top:637.05px;font-size:14.3px;line-height:14.3px;color:#3c4043;font-weight:400;letter-spacing:0.000px;transform:scaleX(0.9450);transform-origin:0 0;">Medium</div>
<div class="t" style="left:1301.90px;top:639.70px;font-size:10px;line-height:10px;color:#3c4043;font-weight:400;letter-spacing:0.000px;">—</div>
<div class="t" style="left:1423.49px;top:637.05px;font-size:14.3px;line-height:14.3px;color:#3c4043;font-weight:400;letter-spacing:0.000px;transform:scaleX(0.9450);transform-origin:0 0;">€0.06</div>
<div class="t" style="left:1568.49px;top:637.05px;font-size:14.3px;line-height:14.3px;color:#3c4043;font-weight:400;letter-spacing:0.000px;transform:scaleX(0.9450);transform-origin:0 0;">€0.85</div>
<div class="t" style="left:223.50px;top:683.05px;font-size:14.3px;line-height:14.3px;color:#3c4043;font-weight:400;letter-spacing:0.000px;transform:scaleX(0.9450);transform-origin:0 0;">ai writing tools</div>
<div class="t" style="left:609.96px;top:683.05px;font-size:14.3px;line-height:14.3px;color:#3c4043;font-weight:400;letter-spacing:0.000px;transform:scaleX(0.9450);transform-origin:0 0;">170</div>
<div class="t" style="left:857.79px;top:683.05px;font-size:14.3px;line-height:14.3px;color:#3c4043;font-weight:400;letter-spacing:0.000px;transform:scaleX(0.9200);transform-origin:0 0;">0%</div>
<div class="t" style="left:988.29px;top:683.05px;font-size:14.3px;line-height:14.3px;color:#3c4043;font-weight:400;letter-spacing:0.000px;transform:scaleX(0.9200);transform-origin:0 0;">+50%</div>
<div class="t" style="left:1041.60px;top:683.05px;font-size:14.3px;line-height:14.3px;color:#3c4043;font-weight:400;letter-spacing:0.000px;transform:scaleX(0.9450);transform-origin:0 0;">Medium</div>
<div class="t" style="left:1301.90px;top:685.70px;font-size:10px;line-height:10px;color:#3c4043;font-weight:400;letter-spacing:0.000px;">—</div>
<div class="t" style="left:1423.49px;top:683.05px;font-size:14.3px;line-height:14.3px;color:#3c4043;font-weight:400;letter-spacing:0.000px;transform:scaleX(0.9450);transform-origin:0 0;">€0.10</div>
<div class="t" style="left:1568.49px;top:683.05px;font-size:14.3px;line-height:14.3px;color:#3c4043;font-weight:400;letter-spacing:0.000px;transform:scaleX(0.9450);transform-origin:0 0;">€0.87</div>
<div class="t" style="left:223.50px;top:729.05px;font-size:14.3px;line-height:14.3px;color:#3c4043;font-weight:400;letter-spacing:0.000px;transform:scaleX(0.9450);transform-origin:0 0;">ai paper writer</div>
<div class="t" style="left:617.47px;top:729.05px;font-size:14.3px;line-height:14.3px;color:#3c4043;font-weight:400;letter-spacing:0.000px;transform:scaleX(0.9450);transform-origin:0 0;">10</div>
<div class="t" style="left:857.79px;top:729.05px;font-size:14.3px;line-height:14.3px;color:#3c4043;font-weight:400;letter-spacing:0.000px;transform:scaleX(0.9200);transform-origin:0 0;">0%</div>
<div class="t" style="left:1003.29px;top:729.05px;font-size:14.3px;line-height:14.3px;color:#3c4043;font-weight:400;letter-spacing:0.000px;transform:scaleX(0.9200);transform-origin:0 0;">0%</div>
<div class="t" style="left:1041.60px;top:729.05px;font-size:14.3px;line-height:14.3px;color:#3c4043;font-weight:400;letter-spacing:0.000px;transform:scaleX(0.9450);transform-origin:0 0;">Low</div>
<div class="t" style="left:1301.90px;top:731.70px;font-size:10px;line-height:10px;color:#3c4043;font-weight:400;letter-spacing:0.000px;">—</div>
<div class="t" style="left:1423.49px;top:729.05px;font-size:14.3px;line-height:14.3px;color:#3c4043;font-weight:400;letter-spacing:0.000px;transform:scaleX(0.9450);transform-origin:0 0;">€0.18</div>
<div class="t" style="left:1568.49px;top:729.05px;font-size:14.3px;line-height:14.3px;color:#3c4043;font-weight:400;letter-spacing:0.000px;transform:scaleX(0.9450);transform-origin:0 0;">€0.98</div>
<div class="t" style="left:223.50px;top:775.05px;font-size:14.3px;line-height:14.3px;color:#3c4043;font-weight:400;letter-spacing:0.000px;transform:scaleX(0.9450);transform-origin:0 0;">ai content writer</div>
<div class="t" style="left:617.47px;top:775.05px;font-size:14.3px;line-height:14.3px;color:#3c4043;font-weight:400;letter-spacing:0.000px;transform:scaleX(0.9450);transform-origin:0 0;">70</div>
<div class="t" style="left:842.79px;top:775.05px;font-size:14.3px;line-height:14.3px;color:#3c4043;font-weight:400;letter-spacing:0.000px;transform:scaleX(0.9200);transform-origin:0 0;">+75%</div>
<div class="t" style="left:1003.29px;top:775.05px;font-size:14.3px;line-height:14.3px;color:#3c4043;font-weight:400;letter-spacing:0.000px;transform:scaleX(0.9200);transform-origin:0 0;">0%</div>
<div class="t" style="left:1041.60px;top:775.05px;font-size:14.3px;line-height:14.3px;color:#3c4043;font-weight:400;letter-spacing:0.000px;transform:scaleX(0.9450);transform-origin:0 0;">Medium</div>
<div class="t" style="left:1301.90px;top:777.70px;font-size:10px;line-height:10px;color:#3c4043;font-weight:400;letter-spacing:0.000px;">—</div>
<div class="t" style="left:1423.49px;top:775.05px;font-size:14.3px;line-height:14.3px;color:#3c4043;font-weight:400;letter-spacing:0.000px;transform:scaleX(0.9450);transform-origin:0 0;">€0.13</div>
<div class="t" style="left:1568.49px;top:775.05px;font-size:14.3px;line-height:14.3px;color:#3c4043;font-weight:400;letter-spacing:0.000px;transform:scaleX(0.9450);transform-origin:0 0;">€1.10</div>
<div class="t" style="left:223.50px;top:821.05px;font-size:14.3px;line-height:14.3px;color:#3c4043;font-weight:400;letter-spacing:0.000px;transform:scaleX(0.9450);transform-origin:0 0;">ai article writer</div>
<div class="t" style="left:617.47px;top:821.05px;font-size:14.3px;line-height:14.3px;color:#3c4043;font-weight:400;letter-spacing:0.000px;transform:scaleX(0.9450);transform-origin:0 0;">90</div>
<div class="t" style="left:857.79px;top:821.05px;font-size:14.3px;line-height:14.3px;color:#3c4043;font-weight:400;letter-spacing:0.000px;transform:scaleX(0.9200);transform-origin:0 0;">0%</div>
<div class="t" style="left:988.29px;top:821.05px;font-size:14.3px;line-height:14.3px;color:#3c4043;font-weight:400;letter-spacing:0.000px;transform:scaleX(0.9200);transform-origin:0 0;">+29%</div>
<div class="t" style="left:1041.60px;top:821.05px;font-size:14.3px;line-height:14.3px;color:#3c4043;font-weight:400;letter-spacing:0.000px;transform:scaleX(0.9450);transform-origin:0 0;">Medium</div>
<div class="t" style="left:1301.90px;top:823.70px;font-size:10px;line-height:10px;color:#3c4043;font-weight:400;letter-spacing:0.000px;">—</div>
<div class="t" style="left:1423.49px;top:821.05px;font-size:14.3px;line-height:14.3px;color:#3c4043;font-weight:400;letter-spacing:0.000px;transform:scaleX(0.9450);transform-origin:0 0;">€0.07</div>
<div class="t" style="left:1568.49px;top:821.05px;font-size:14.3px;line-height:14.3px;color:#3c4043;font-weight:400;letter-spacing:0.000px;transform:scaleX(0.9450);transform-origin:0 0;">€0.92</div>
</body></html>
